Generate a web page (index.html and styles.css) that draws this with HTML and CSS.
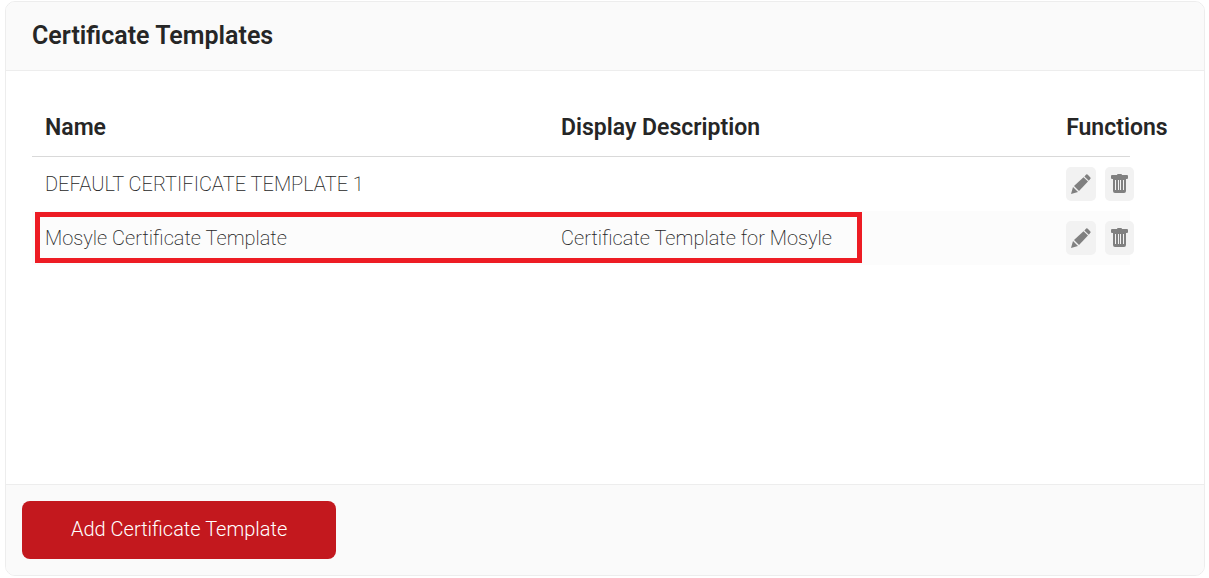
FILE: index.html
```html
<!DOCTYPE html>
<html lang="en">
<head>
  <meta charset="UTF-8">
  <meta name="viewport" content="width=device-width, initial-scale=1.0">
  <title>Certificate Templates</title>
  <link rel="stylesheet" href="styles.css">
</head>
<body>
  <!-- Shared icons -->
  <svg class="icon-defs" aria-hidden="true">
    <symbol id="icon-pencil" viewBox="0 0 20 20">
      <path d="M0 20 2 13 7 18Z"/>
      <path d="M3 12 12.5 3.2 17 7.6 8 17Z"/>
      <path d="M13.4 2.4 15.2.6Q16 0 16.8.8L19.4 3.4Q20 4 19.4 4.8L17.8 6.8Z"/>
    </symbol>
    <symbol id="icon-trash" viewBox="0 0 17 19">
      <path fill-rule="evenodd" d="M6 1Q6 0 7 0H10Q11 0 11 1H16Q17 1 17 2V4Q17 5 16 5H15V17Q15 19 13 19H4Q2 19 2 17V5H1Q0 5 0 4V2Q0 1 1 1ZM4 6V16H5V6ZM7 6V16H8V6ZM9 6V16H10V6ZM12 6V16H13V6Z"/>
    </symbol>
  </svg>

  <section class="panel">
    <header class="panel-header">
      <h1>Certificate Templates</h1>
    </header>

    <div class="panel-body">
      <table class="templates">
        <thead>
          <tr>
            <th class="col-name" scope="col">Name</th>
            <th class="col-description" scope="col">Display Description</th>
            <th class="col-functions" scope="col">Functions</th>
          </tr>
        </thead>
        <tbody>
          <tr>
            <td>DEFAULT CERTIFICATE TEMPLATE 1</td>
            <td></td>
            <td>
              <div class="functions">
                <button type="button" class="icon-button" aria-label="Edit"><svg width="20" height="20"><use href="#icon-pencil"/></svg></button>
                <button type="button" class="icon-button delete" aria-label="Delete"><svg width="17" height="19"><use href="#icon-trash"/></svg></button>
              </div>
            </td>
          </tr>
          <tr class="highlighted">
            <td>Mosyle Certificate Template</td>
            <td>Certificate Template for Mosyle</td>
            <td>
              <div class="functions">
                <button type="button" class="icon-button" aria-label="Edit"><svg width="20" height="20"><use href="#icon-pencil"/></svg></button>
                <button type="button" class="icon-button delete" aria-label="Delete"><svg width="17" height="19"><use href="#icon-trash"/></svg></button>
              </div>
            </td>
          </tr>
        </tbody>
      </table>
    </div>

    <footer class="panel-footer">
      <button type="button" class="add-button">Add Certificate Template</button>
    </footer>
  </section>
</body>
</html>
```

FILE: styles.css
```css
*,
*::after {
  box-sizing: border-box;
}

body {
  margin: 0;
  padding: 1px 4px 2px 5px;
  min-height: 100vh;
  display: flex;
  background: #fff;
  color: #262626;
  font-family: Roboto, "Liberation Sans", sans-serif;
  font-size: 20px;
  font-weight: 200;
}

.icon-defs {
  display: none;
}

/* Panel */
.panel {
  flex: 1;
  display: flex;
  flex-direction: column;
  border: 1px solid #ededed;
  border-radius: 10px;
  overflow: hidden;
}

.panel-header {
  padding: 18px 26px;
  background: #fafafa;
  border-bottom: 1px solid #ededed;
}

.panel-header h1 {
  margin: 0;
  font-size: 25px;
  line-height: 32px;
  font-weight: 600;
}

.panel-body {
  flex: 1;
  padding: 28px 74px 28px 26px;
}

.panel-footer {
  padding: 16px;
  background: #fafafa;
  border-top: 1px solid #ededed;
}

/* Table of templates */
.templates {
  width: 100%;
  table-layout: fixed;
  border-collapse: separate;
  border-spacing: 0;
}

.templates th,
.templates td {
  padding: 0 0 0 13px;
  text-align: left;
  white-space: nowrap;
}

.templates th {
  height: 58px;
  border-bottom: 1px solid #d9d9d9;
  font-size: 23px;
  font-weight: 600;
}

.templates td {
  height: 54px;
  padding-bottom: 1px;
}

.templates tbody tr:nth-child(even) {
  background: #fcfcfc;
}

.col-name {
  width: 47%;
}

.col-description {
  width: 46%;
}

.col-functions {
  width: 7%;
}

/* Red frame round the name and description */
.highlighted {
  position: relative;
}

.highlighted::after {
  content: "";
  position: absolute;
  top: 1px;
  bottom: 2px;
  left: 3px;
  width: 75.3%;
  border: 5px solid #ed1c24;
  pointer-events: none;
}

/* Buttons */
.functions {
  display: flex;
  gap: 9px;
}

.icon-button {
  flex: none;
  display: flex;
  align-items: center;
  justify-content: center;
  width: 30px;
  height: 34px;
  padding: 0;
  border: 0;
  border-radius: 5px;
  background: #f2f2f2;
  cursor: pointer;
}

.icon-button.delete {
  width: 29px;
}

.icon-button svg {
  fill: #808080;
}

.add-button {
  display: block;
  padding: 0 49px 2px;
  height: 58px;
  border: 0;
  border-radius: 8px;
  background: #c3181e;
  color: #fff;
  font-family: inherit;
  font-size: 20px;
  font-weight: 300;
  cursor: pointer;
}
```
